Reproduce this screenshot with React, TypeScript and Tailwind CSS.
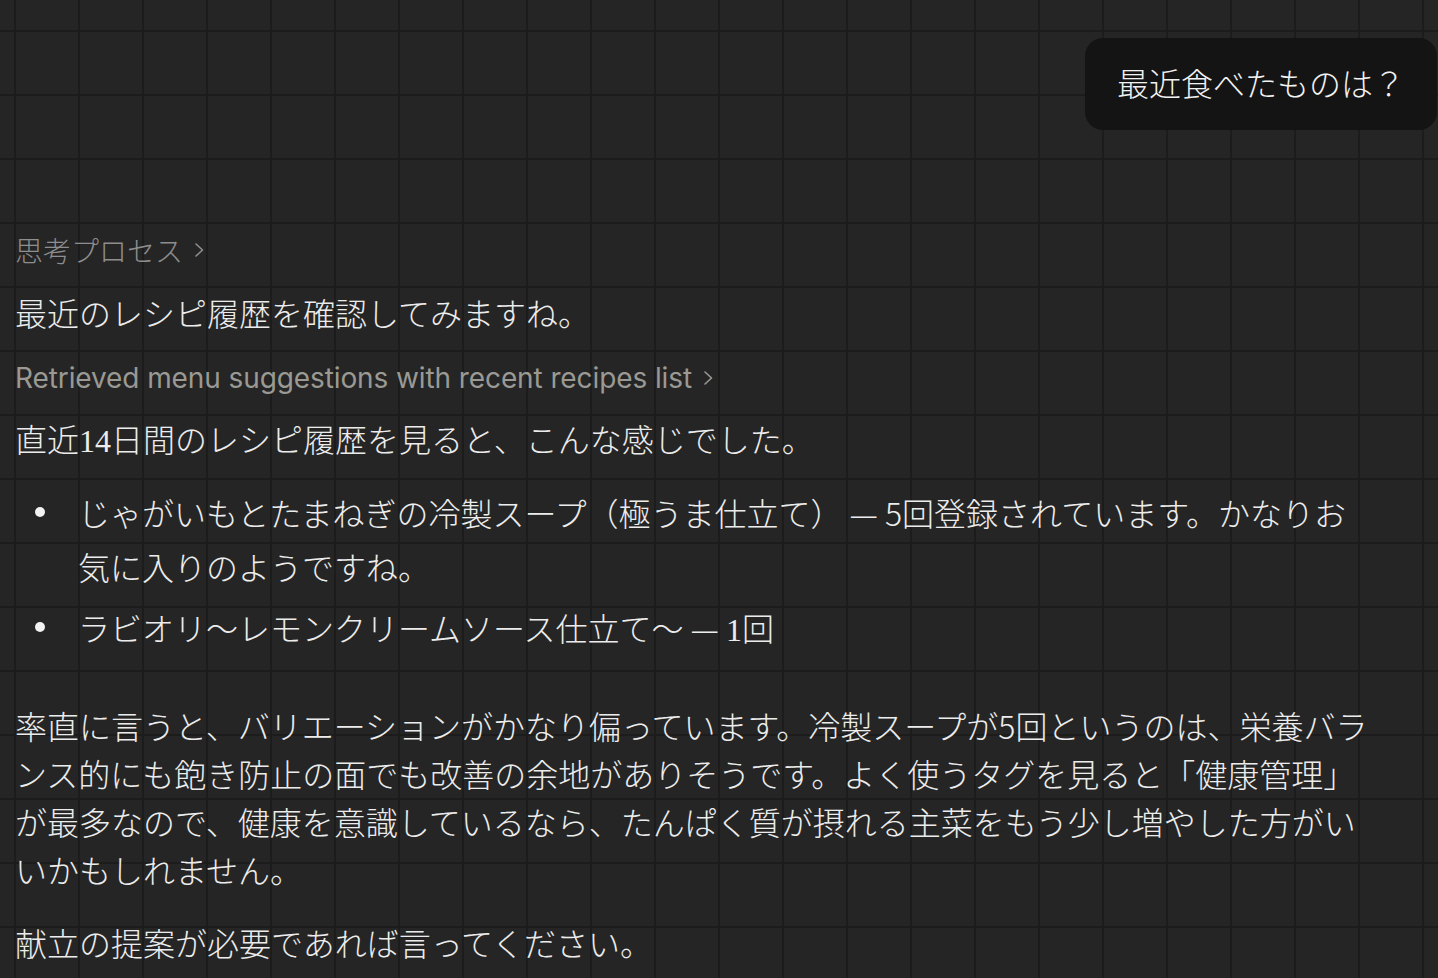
import React from "react";

const Chevron = () => (
  <svg width="12" height="18" viewBox="0 0 12 18" fill="none" className="inline-block">
    <path d="M3 3 L9.5 9 L3 15" stroke="currentColor" strokeWidth="1.6" strokeLinecap="round" strokeLinejoin="round" />
  </svg>
);

const Serif = ({ children }: { children: React.ReactNode }) => (
  <span className="font-['Liberation_Serif',serif] font-normal">{children}</span>
);

const Dot = () => (
  <span className="w-[63px] shrink-0 pl-[20px] pt-[22px]">
    <span className="block w-[10px] h-[10px] rounded-full bg-[#f2f2f2]" />
  </span>
);

export default function App() {
  return (
    <div className="min-h-screen w-full bg-[#252525] bg-[image:linear-gradient(to_right,#1c1c1c_2px,transparent_2px),linear-gradient(to_bottom,#1c1c1c_2px,transparent_2px)] bg-[size:64px_64px] bg-[position:14px_30px] font-['Noto_Sans_CJK_JP',sans-serif] font-light text-[#ececec] overflow-hidden">
      <div className="flex justify-end pt-[38px] pr-[1px]">
        <div className="h-[92px] rounded-[18px] bg-[#141414] pl-[32px] pr-[32px] pb-[4px] flex items-center text-[32px] leading-none text-[#f2f2f2]">
          最近食べたものは？
        </div>
      </div>

      <div className="pl-[15px] w-[1370px]">
        <div className="mt-[100px] flex items-center gap-[10px] text-[28px] leading-[40px] text-[#8e8e8e]">
          <span>思考プロセス</span>
          <Chevron />
        </div>

        <p className="mt-[18px] text-[32px] leading-[48px]">最近のレシピ履歴を確認してみますね。</p>

        <div className="mt-[22px] flex items-center gap-[10px] text-[28px] leading-[40px] text-[#9a9994] font-['Inter',sans-serif] font-normal tracking-[-0.1px]">
          <span>Retrieved menu suggestions with recent recipes list</span>
          <Chevron />
        </div>

        <p className="mt-[16px] text-[32px] leading-[48px]">
          直近<Serif>14</Serif>日間のレシピ履歴を見ると、こんな感じでした。
        </p>

        <ul className="mt-[20px] flex flex-col gap-[7px] text-[32px] leading-[54px]">
          <li className="flex">
            <Dot />
            <span>じゃがいもとたまねぎの冷製スープ（極うま仕立て） — 5回登録されています。かなりお気に入りのようですね。</span>
          </li>
          <li className="flex">
            <Dot />
            <span>
              ラビオリ〜レモンクリームソース仕立て〜 — <Serif>1</Serif>回
            </span>
          </li>
        </ul>

        <p className="mt-[44px] text-[32px] leading-[48px]">
          率直に言うと、バリエーションがかなり偏っています。冷製スープが5回というのは、栄養バランス的にも飽き防止の面でも改善の余地がありそうです。よく使うタグを見ると「健康管理」が最多なので、健康を意識しているなら、たんぱく質が摂れる主菜をもう少し増やした方がいいかもしれません。
        </p>

        <p className="mt-[25px] text-[32px] leading-[48px]">献立の提案が必要であれば言ってください。</p>
      </div>
    </div>
  );
}
